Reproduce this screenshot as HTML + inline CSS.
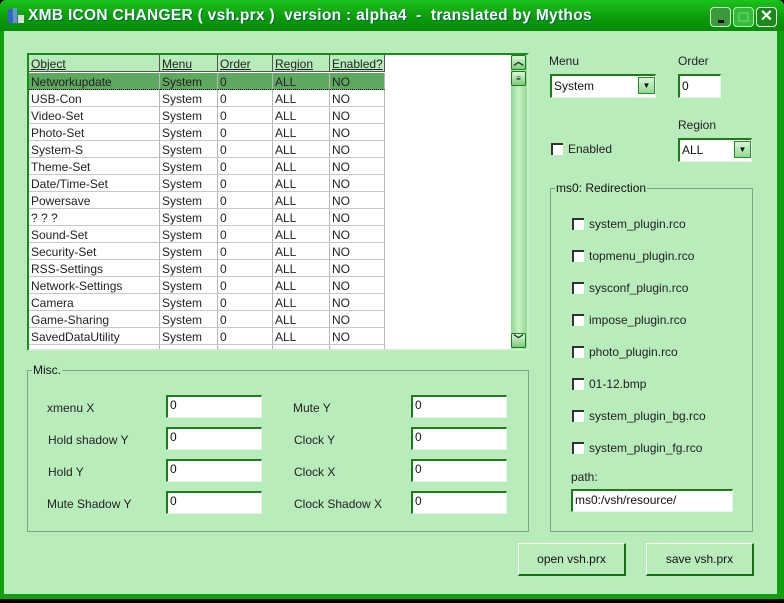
<!DOCTYPE html>
<html><head><style>
*{box-sizing:border-box;margin:0;padding:0}
body{width:784px;height:603px;background:#000;position:relative;overflow:hidden;font-family:"Liberation Sans",sans-serif;font-size:12px;color:#111}
.win{position:absolute;left:0;top:0;width:784px;height:599px;background:#109e10;border-radius:6px 6px 0 0}
.title{position:absolute;left:0;top:0;width:784px;height:31px;background:linear-gradient(#1cc21c,#0a9a0a 60%,#078a07);border-radius:6px 6px 0 0}
.title span{position:absolute;left:28px;top:7px;color:#fff;font-weight:bold;font-size:15.5px;letter-spacing:0.3px;text-shadow:1px 1px 0 #064;}
.body{position:absolute;left:4px;top:31px;width:773px;height:563px;background:#b9ecbb}
.a{position:absolute}
.list{left:27px;top:53px;width:502px;height:298px;background:#fff;border:2px solid #1c8a1c;border-right-color:#c9f0c9;border-bottom-color:#c9f0c9;overflow:hidden}
.row{position:absolute;left:0;height:17px;width:355px}
.c{position:absolute;top:0;height:17px;border-right:1px solid #b8b8b8;border-bottom:1px solid #c8c8c8;padding-left:2px;line-height:18px;font-size:12px;white-space:nowrap;overflow:hidden;color:#222}
.hdr .c{background:#b9ecbb;border-right:1px solid #555;border-bottom:1px solid #555;text-decoration:underline}
.sel .c{background:#5fa85f;border-bottom:1px dotted #000}
.sb{position:absolute;left:482px;top:0;width:16px;height:294px;background:linear-gradient(90deg,#8fd88f,#c7f2c7,#8fd88f)}
.btn{position:absolute;width:15px;height:15px;background:linear-gradient(#d8f8d8,#7ccc7c);border:1px solid #1a7a1a;border-radius:2px;font-size:10px;text-align:center;line-height:13px;font-weight:bold}
.inp{position:absolute;background:#fff;border-top:2px solid #1c7a1c;border-left:2px solid #1c7a1c;border-right:1px solid #e8f8e8;border-bottom:1px solid #e8f8e8;padding-left:2px;line-height:17px;font-size:12px}
.grp{position:absolute;border:1px solid #7ca87c}
.grp .lg{position:absolute;top:-8px;left:4px;background:#b9ecbb;padding:0 1px;font-size:12px}
.cb{position:absolute;width:12px;height:12px;background:#fff;border-top:2px solid #333;border-left:2px solid #333}
.lbl{position:absolute;font-size:12px;color:#222}
.pb{position:absolute;width:108px;height:33px;background:#b9ecbb;border:1px solid #fff;border-right:2px solid #1a6a1a;border-bottom:2px solid #1a6a1a;text-align:center;line-height:30px;font-size:12px}
.dd{position:absolute;width:17px;height:17px;background:linear-gradient(#d8f8d8,#8fd88f);border:1px solid #2a8a2a;font-size:8px;text-align:center;line-height:15px}
</style></head><body>
<div class="win">
<div class="title">
<svg class="a" style="left:7px;top:7px" width="18" height="18"><rect x="1" y="2" width="4" height="14" fill="#3a5ad8"/><rect x="6" y="1" width="4" height="15" fill="#6a8aff"/><rect x="11" y="8" width="6" height="8" fill="#ddd"/></svg>
<span>XMB ICON CHANGER ( vsh.prx )&nbsp; version : alpha4 &nbsp;- &nbsp;translated by Mythos</span>
<div class="a" style="left:710px;top:7px;width:21px;height:20px;background:#3a9a3a;border:1px solid #cfc;border-radius:4px"><div class="a" style="left:7px;top:12px;width:6px;height:3px;background:#000"></div></div>
<div class="a" style="left:733px;top:7px;width:21px;height:20px;background:#3aba3a;border:1px solid #afa;border-radius:4px"><div class="a" style="left:4px;top:4px;width:11px;height:10px;border:2px solid #5c5"></div></div>
<div class="a" style="left:756px;top:7px;width:21px;height:20px;background:#1a8a1a;border:1px solid #efe;border-radius:4px;color:#fff;font-weight:bold;font-size:16px;text-align:center;line-height:18px">✕</div>
</div>
<div class="body"></div>
</div>

<div class="a list">
<div class="row hdr" style="top:0"><div class="c" style="left:0;width:131px">Object</div><div class="c" style="left:131px;width:58px">Menu</div><div class="c" style="left:189px;width:55px">Order</div><div class="c" style="left:244px;width:57px">Region</div><div class="c" style="left:301px;width:55px">Enabled?</div></div>
<div id="rows"></div>
<div class="sb"><div class="btn" style="left:0;top:0">︿</div><div class="btn" style="left:0;top:16px;font-size:8px">≡</div><div class="btn" style="left:0;top:278px">﹀</div></div>
</div>

<div class="grp" style="left:27px;top:370px;width:502px;height:162px"><div class="lg">Misc.</div></div>
<div class="lbl" style="left:47px;top:401px">xmenu X</div>
<div class="lbl" style="left:48px;top:433px">Hold shadow Y</div>
<div class="lbl" style="left:48px;top:465px">Hold Y</div>
<div class="lbl" style="left:47px;top:497px">Mute Shadow Y</div>
<div class="lbl" style="left:293px;top:401px">Mute Y</div>
<div class="lbl" style="left:294px;top:433px">Clock Y</div>
<div class="lbl" style="left:294px;top:465px">Clock X</div>
<div class="lbl" style="left:294px;top:497px">Clock Shadow X</div>
<div class="inp" style="left:166px;top:395px;width:96px;height:23px">0</div>
<div class="inp" style="left:166px;top:427px;width:96px;height:23px">0</div>
<div class="inp" style="left:166px;top:459px;width:96px;height:23px">0</div>
<div class="inp" style="left:166px;top:491px;width:96px;height:23px">0</div>
<div class="inp" style="left:411px;top:395px;width:96px;height:23px">0</div>
<div class="inp" style="left:411px;top:427px;width:96px;height:23px">0</div>
<div class="inp" style="left:411px;top:459px;width:96px;height:23px">0</div>
<div class="inp" style="left:411px;top:491px;width:96px;height:23px">0</div>

<div class="lbl" style="left:549px;top:54px">Menu</div>
<div class="lbl" style="left:678px;top:54px">Order</div>
<div class="inp" style="left:550px;top:74px;width:106px;height:24px;line-height:20px">System</div>
<div class="dd" style="left:638px;top:77px">▼</div>
<div class="inp" style="left:678px;top:74px;width:43px;height:24px;line-height:20px">0</div>
<div class="cb" style="left:551px;top:143px"></div>
<div class="lbl" style="left:568px;top:142px">Enabled</div>
<div class="lbl" style="left:678px;top:118px">Region</div>
<div class="inp" style="left:678px;top:138px;width:74px;height:24px;line-height:20px">ALL</div>
<div class="dd" style="left:734px;top:141px">▼</div>

<div class="grp" style="left:550px;top:188px;width:203px;height:344px"><div class="lg">ms0: Redirection</div></div>
<div class="cb" style="left:572px;top:218px"></div><div class="lbl" style="left:589px;top:217px">system_plugin.rco</div>
<div class="cb" style="left:572px;top:250px"></div><div class="lbl" style="left:589px;top:249px">topmenu_plugin.rco</div>
<div class="cb" style="left:572px;top:282px"></div><div class="lbl" style="left:589px;top:281px">sysconf_plugin.rco</div>
<div class="cb" style="left:572px;top:314px"></div><div class="lbl" style="left:589px;top:313px">impose_plugin.rco</div>
<div class="cb" style="left:572px;top:346px"></div><div class="lbl" style="left:589px;top:345px">photo_plugin.rco</div>
<div class="cb" style="left:572px;top:378px"></div><div class="lbl" style="left:589px;top:377px">01-12.bmp</div>
<div class="cb" style="left:572px;top:410px"></div><div class="lbl" style="left:589px;top:409px">system_plugin_bg.rco</div>
<div class="cb" style="left:572px;top:442px"></div><div class="lbl" style="left:589px;top:441px">system_plugin_fg.rco</div>
<div class="lbl" style="left:571px;top:470px">path:</div>
<div class="inp" style="left:571px;top:489px;width:162px;height:23px;line-height:19px">ms0:/vsh/resource/</div>

<div class="pb" style="left:518px;top:543px">open vsh.prx</div>
<div class="pb" style="left:646px;top:543px">save vsh.prx</div>

<script>
var n=["Networkupdate","USB-Con","Video-Set","Photo-Set","System-S","Theme-Set","Date/Time-Set","Powersave"," ? ? ?","Sound-Set","Security-Set","RSS-Settings","Network-Settings","Camera","Game-Sharing","SavedDataUtility","Settings-Locale"];
var h="";for(var i=0;i<n.length;i++){var t=18+i*17;h+='<div class="row'+(i==0?' sel':'')+'" style="top:'+t+'px"><div class="c" style="left:0;width:131px">'+n[i]+'</div><div class="c" style="left:131px;width:58px">System</div><div class="c" style="left:189px;width:55px">0</div><div class="c" style="left:244px;width:57px">ALL</div><div class="c" style="left:301px;width:55px">NO</div></div>';}
document.getElementById("rows").innerHTML=h;
</script>
</body></html>
